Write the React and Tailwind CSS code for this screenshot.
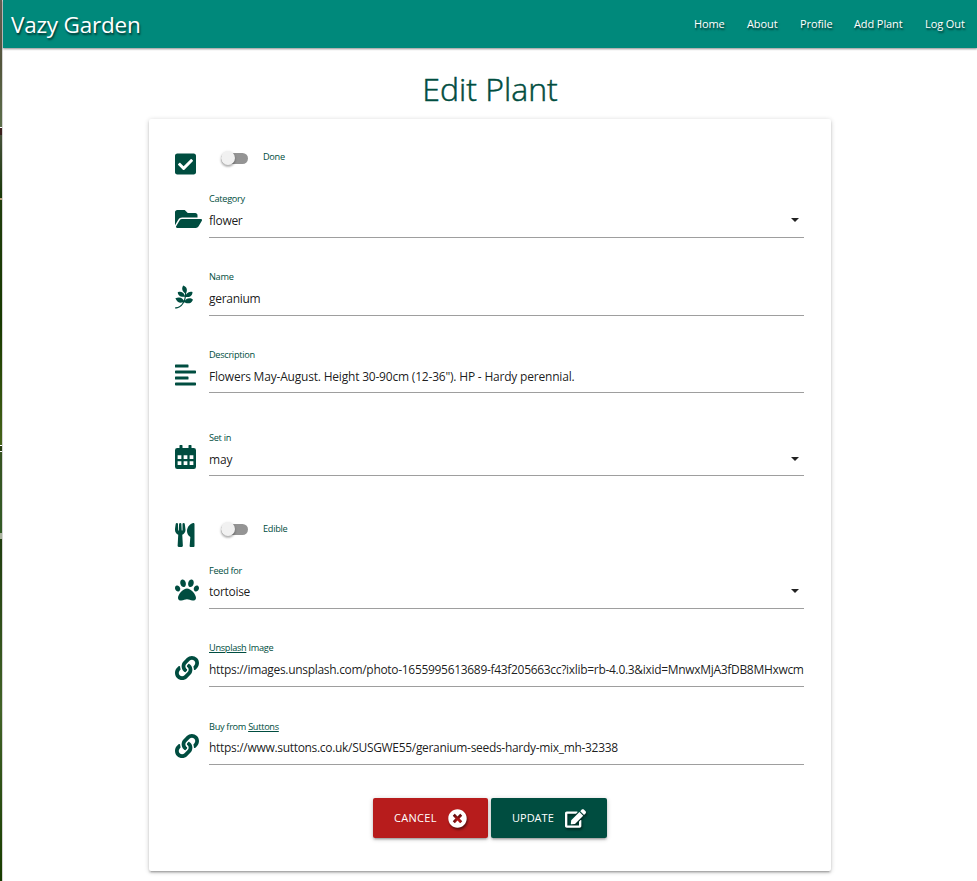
import React from "react";
import {
  FaCheckSquare, FaFolderOpen, FaPagelines, FaAlignLeft,
  FaUtensils, FaPaw, FaLink, FaTimesCircle, FaEdit,
} from "react-icons/fa";

const navLinks = [
  { label: "Home", cls: "w-[31px] mr-[22px]" },
  { label: "About", cls: "w-[31px] mr-[22px]" },
  { label: "Profile", cls: "w-[32px] mr-[22px]" },
  { label: "Add Plant", cls: "w-[49px] mr-[22px]" },
  { label: "Log Out", cls: "w-[41px]" },
];

function CalendarIcon(props) {
  return (
    <svg viewBox="0 0 448 512" fill="currentColor" {...props}>
      <path
        fillRule="evenodd"
        d="M96 12a12 12 0 0 1 12-12h40a12 12 0 0 1 12 12v52h128V12a12 12 0 0 1 12-12h40a12 12 0 0 1 12 12v52h48a48 48 0 0 1 48 48v352a48 48 0 0 1-48 48H48a48 48 0 0 1-48-48V112a48 48 0 0 1 48-48h48zM56 220v78h80v-78zM184 220v78h80v-78zM312 220v78h80v-78zM56 348v78h80v-78zM184 348v78h80v-78zM312 348v78h80v-78z"
      />
    </svg>
  );
}

function Row({ icon: Icon, className, iconClass = "mt-[15px]", children }) {
  return (
    <div className={"flex items-start " + className}>
      <div className="w-[34px] shrink-0 text-[#004d40]">
        <Icon preserveAspectRatio="xMinYMid meet" className={"h-6 w-[27px] " + iconClass} />
      </div>
      {children}
    </div>
  );
}

function Field({ label, value, select, labelClass = "", valueClass = "tracking-[-0.3px]", caretClass = "top-[26px]" }) {
  return (
    <div className="relative h-[46px] w-[595px] border-b border-[#9e9e9e]">
      <div className={"h-[14px] text-[9.2px] leading-[14px] tracking-[-0.3px] whitespace-nowrap text-[#004d40] " + labelClass}>{label}</div>
      <div className={"h-[30px] text-[12px] leading-[30px] whitespace-nowrap text-black/90 " + valueClass}>{value}</div>
      {select && (
        <svg className={"absolute right-[5px] h-1 w-2 " + caretClass} viewBox="0 0 8 4">
          <path d="M0 0h8L4 4z" fill="#222" />
        </svg>
      )}
    </div>
  );
}

function Switch({ label, labelClass }) {
  return (
    <div className="flex h-[22px] items-center pl-[12px]">
      <div className="flex h-[11px] w-[27px] items-center rounded-full bg-[#949494]">
        <div className="h-[14px] w-[14px] shrink-0 rounded-full bg-[#f1f1f1] shadow-[0_2px_2px_rgba(0,0,0,0.2),0_1px_3px_rgba(0,0,0,0.2)]" />
      </div>
      <div className={"ml-[15px] text-[9.2px] leading-[14px] tracking-[-0.3px] text-[#004d40] " + labelClass}>{label}</div>
    </div>
  );
}

const cardShadow = "shadow-[0_2px_2px_0_rgba(0,0,0,0.14),0_3px_1px_-2px_rgba(0,0,0,0.12),0_1px_5px_0_rgba(0,0,0,0.2)]";

export default function App() {
  return (
    <div className="flex h-[881px] w-[977px] overflow-hidden bg-white font-['Open_Sans','Noto_Sans',sans-serif]">
      <div className="flex w-[3px] shrink-0 flex-col border-r border-[#d5d5d5]">
        <div className="h-[127px] shrink-0 bg-linear-to-b from-[#665f53] via-[#53563c] to-[#5c6e4b]" />
        <div className="h-px shrink-0 bg-white" />
        <div className="h-[7px] shrink-0 bg-[#3b201c]" />
        <div className="h-[63px] shrink-0 bg-linear-to-b from-[#465139] to-[#173806]" />
        <div className="h-[2px] shrink-0 bg-[#b9a078]" />
        <div className="h-[245px] shrink-0 bg-linear-to-b from-[#203d0d] via-[#173900] to-[#466419]" />
        <div className="h-px shrink-0 bg-white" />
        <div className="h-[5px] shrink-0 bg-[#263c0e]" />
        <div className="h-px shrink-0 bg-white" />
        <div className="h-[81px] shrink-0 bg-linear-to-b from-[#365321] to-[#335b26]" />
        <div className="h-[6px] shrink-0 bg-[#a9b39c]" />
        <div className="grow bg-linear-to-b from-[#1f3d0e] via-[#426327] to-[#173c00]" />
      </div>
      <div className="w-[974px]">
        <header className="flex h-12 items-center justify-between bg-[#00897b] pr-[11px] pl-2 text-white shadow-[0_1px_2px_rgba(0,0,0,0.45)] [text-shadow:1px_2px_2px_rgba(0,0,0,0.6)]">
          <div className="pt-[2px] text-[22.5px] leading-[46px] tracking-[-0.2px] whitespace-nowrap">Vazy Garden</div>
          <nav className="flex text-[11px] leading-[48px] tracking-[-0.1px] whitespace-nowrap">
            {navLinks.map((l) => (
              <a key={l.label} className={l.cls}>{l.label}</a>
            ))}
          </nav>
        </header>
        <h1 className="mt-[17px] h-[54px] text-center text-[32px] leading-[48px] font-light text-[#004d40] [-webkit-text-stroke:0.5px_#004d40]">Edit Plant</h1>
        <main className={"ml-[146px] h-[752px] w-[682px] rounded-[2px] bg-white pt-[28px] pl-[26px] " + cardShadow}>
          <Row icon={FaCheckSquare} className="h-[45px]" iconClass="mt-[5px]">
            <Switch label="Done" labelClass="pb-[3px]" />
          </Row>
          <Row icon={FaFolderOpen} className="h-[78px]"><Field label="Category" value="flower" select /></Row>
          <Row icon={FaPagelines} className="h-[77px]"><Field label="Name" value="geranium" /></Row>
          <Row icon={FaAlignLeft} className="h-[83px]" iconClass="mt-[16px]">
            <Field
              label="Description"
              value={'Flowers May-August. Height 30-90cm (12-36"). HP - Hardy perennial.'}
              labelClass="translate-y-px"
              valueClass="translate-y-px tracking-[-0.2px]"
            />
          </Row>
          <Row icon={CalendarIcon} className="h-[88px]">
            <Field label="Set in" value="may" select labelClass="translate-y-px" valueClass="translate-y-px tracking-[-0.2px]" caretClass="top-[27px]" />
          </Row>
          <Row icon={FaUtensils} className="h-[45px]" iconClass="mt-[5px]">
            <Switch label="Edible" labelClass="pb-px" />
          </Row>
          <Row icon={FaPaw} className="h-[78px]"><Field label="Feed for" value="tortoise" select labelClass="translate-y-px" /></Row>
          <Row icon={FaLink} className="h-[78px]">
            <Field
              label={<><u>Unsplash</u> Image</>}
              value="https://images.unsplash.com/photo-1655995613689-f43f205663cc?ixlib=rb-4.0.3&ixid=MnwxMjA3fDB8MHxwcm"
              valueClass="tracking-[-0.31px]"
            />
          </Row>
          <Row icon={FaLink} className="h-[79px]">
            <Field
              label={<>Buy from <u>Suttons</u></>}
              value="https://www.suttons.co.uk/SUSGWE55/geranium-seeds-hardy-mix_mh-32338"
              labelClass="translate-y-px"
              valueClass="tracking-[-0.31px]"
            />
          </Row>
          <div className="flex gap-[3px] pl-[198px] text-[11px] text-white [text-shadow:1px_2px_2px_rgba(0,0,0,0.6)]">
            <button className={"flex h-10 w-[115px] items-center rounded-[2px] bg-[#b71c1c] pl-[21px] " + cardShadow}>
              <span className="w-[54px] text-left tracking-[0.3px]">CANCEL</span>
              <FaTimesCircle className="h-[19px] w-[19px] drop-shadow-[1px_2px_1px_rgba(0,0,0,0.5)]" />
            </button>
            <button className={"flex h-10 w-[116px] items-center rounded-[2px] bg-[#004d40] pl-[21px] " + cardShadow}>
              <span className="w-[53px] text-left">UPDATE</span>
              <FaEdit className="h-[19px] w-[21px] drop-shadow-[1px_2px_1px_rgba(0,0,0,0.5)]" />
            </button>
          </div>
        </main>
      </div>
    </div>
  );
}
